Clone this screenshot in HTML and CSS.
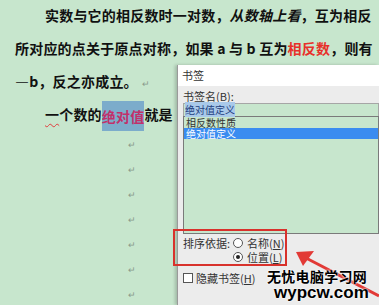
FILE: index.html
```html
<!DOCTYPE html>
<html lang="zh-CN">
<head>
    <meta charset="UTF-8">
    <title>书签</title>
    <link rel="stylesheet" href="styles.css">
</head>
<body>
    <div class="doc">
        <p class="line indent">实数与它的相反数时一对数，<i>从数轴上看</i>，互为相反</p>
        <p class="line">所对应的点关于原点对称，如果 a 与 b 互为<span class="red">相反数</span>，则有</p>
        <p class="line">—b，反之亦成立。<span class="mark">↵</span></p>
        <p class="line indent"><span class="wavy">一</span>个数的<span class="hl">绝对值</span>就是</p>
        <p class="empty first"><span class="mark">↵</span></p>
        <p class="empty"><span class="mark">↵</span></p>
        <p class="empty"><span class="mark">↵</span></p>
        <p class="empty"><span class="mark">↵</span></p>
        <p class="empty"><span class="mark">↵</span></p>
        <p class="empty"><span class="mark">↵</span></p>
        <p class="empty"><span class="mark">↵</span></p>
    </div>

    <div class="dialog">
        <div class="title">书签</div>
        <div class="dialog-body">
            <div class="field-label">书签名(<u>B</u>):</div>
            <div class="textbox"><span class="sel">绝对值定义</span></div>
            <div class="listbox">
                <div class="item">相反数性质</div>
                <div class="item active">绝对值定义</div>
            </div>
            <div class="sort">
                <div class="sort-label">排序依据:</div>
                <div class="radios">
                    <div class="radio-row"><span class="radio"></span><span>名称(<u>N</u>)</span></div>
                    <div class="radio-row"><span class="radio on"></span><span>位置(<u>L</u>)</span></div>
                </div>
            </div>
            <div class="check-row"><span class="check"></span><span>隐藏书签(<u>H</u>)</span></div>
        </div>
    </div>

    <div class="redbox"></div>

    <svg class="arrow" width="379" height="305" viewBox="0 0 379 305">
        <line x1="306" y1="258" x2="379" y2="296" stroke="#e23a36" stroke-width="3"/>
        <polygon points="296,252 314,251 303,266" fill="#e23a36"/>
    </svg>

    <div class="watermark">
        <div class="wm-cn">无忧电脑学习网</div>
        <div class="wm-en">wypcw.com</div>
    </div>
</body>
</html>
```

FILE: styles.css
```css
* {
    margin: 0;
    padding: 0;
    box-sizing: border-box;
}

html {
    overflow: hidden;
}

body {
    background: #c7e6cd;
    width: 379px;
    height: 305px;
    overflow: hidden;
    position: relative;
    font-family: "Noto Sans CJK SC", sans-serif;
    color: #111;
}

.doc {
    margin-top: -1px;
}

.line {
    height: 33px;
    line-height: 33px;
    padding-left: 15px;
    font-size: 14px;
    font-weight: 700;
    letter-spacing: 0.2px;
    white-space: nowrap;
    overflow: hidden;
}

.line.indent {
    padding-left: 45px;
}

.red {
    color: #e8302a;
}

.wavy {
    text-decoration: underline wavy #e03c3c;
    text-decoration-thickness: 1px;
    text-underline-offset: 3px;
}

.hl {
    display: inline-block;
    height: 30px;
    line-height: 30px;
    vertical-align: middle;
    background: #7caccb;
    color: #c2306a;
}

.mark {
    font-size: 9px;
    font-weight: 400;
    color: #8a9a8c;
    margin-left: 4px;
}

.empty {
    height: 25px;
    line-height: 25px;
    padding-left: 124px;
}

.empty.first {
    margin-top: -2px;
}

/* bookmark dialog */
.dialog {
    position: absolute;
    left: 177px;
    top: 65px;
    width: 202px;
    height: 240px;
    background: #ececec;
    border-left: 1px solid #9a9a9a;
    box-shadow: -2px 0 3px rgba(0, 0, 0, 0.2);
    font-size: 11px;
    color: #333;
    overflow: hidden;
}

.title {
    height: 21px;
    line-height: 21px;
    padding-left: 4px;
    background: #fff;
}

.dialog-body {
    padding: 4px 0 0 5px;
}

.field-label {
    height: 13px;
    line-height: 13px;
}

.textbox {
    height: 13px;
    line-height: 12px;
    padding-left: 1px;
    font-size: 10px;
    background: #c7e6cd;
    border: 1px solid #a6a6a6;
    border-bottom: none;
}

.sel {
    background: #a9c9ea;
    color: #1e3e7e;
}

.listbox {
    height: 118px;
    background: #c7e6cd;
    border: 1px solid #7a7a7a;
    font-size: 10px;
}

.item {
    height: 11px;
    line-height: 11px;
    padding-left: 2px;
}

.item.active {
    background: #3a8cf0;
    color: #fff;
}

.sort {
    display: flex;
    margin-top: 2px;
}

.sort-label {
    width: 50px;
    height: 14px;
    line-height: 14px;
}

.radio-row,
.check-row {
    display: flex;
    align-items: center;
    gap: 4px;
    height: 14px;
    line-height: 14px;
}

.radio {
    width: 10px;
    height: 10px;
    border: 1px solid #555;
    border-radius: 50%;
    background: #fff;
    display: flex;
    align-items: center;
    justify-content: center;
}

.radio.on::after {
    content: "";
    width: 4px;
    height: 4px;
    border-radius: 50%;
    background: #222;
}

.check-row {
    margin-top: 7px;
    gap: 3px;
}

.check {
    width: 10px;
    height: 10px;
    border: 1px solid #555;
    background: #fff;
}

.redbox {
    position: absolute;
    left: 173px;
    top: 229px;
    width: 114px;
    height: 37px;
    border: 2px solid #d8322c;
}

.arrow {
    position: absolute;
    left: 0;
    top: 0;
}

.watermark {
    position: absolute;
    left: 267px;
    top: 268px;
    font-weight: 700;
    color: #000;
    text-shadow: 0 0 2px #fff, 0 0 2px #fff;
}

.wm-cn {
    font-size: 14px;
    line-height: 16px;
    letter-spacing: 0.3px;
}

.wm-en {
    font-family: "Liberation Sans", sans-serif;
    font-size: 17px;
    line-height: 17px;
    margin-left: 7px;
}
```
